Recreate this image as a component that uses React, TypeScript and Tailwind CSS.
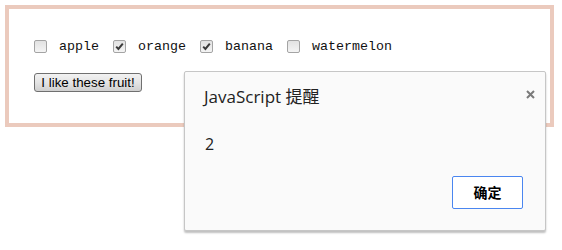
import { FC } from 'react';

const fruits = [
  { name: 'apple', checked: false },
  { name: 'orange', checked: true },
  { name: 'banana', checked: true },
  { name: 'watermelon', checked: false },
];

const Box: FC<{ checked: boolean }> = ({ checked }) => (
  <span className="flex h-[13px] w-[13px] items-center justify-center rounded-[2px] border border-[#a4a4a4] bg-gradient-to-b from-[#e2e2e2] to-[#f4f4f4]">
    {checked && (
      <svg width="9" height="9" viewBox="0 0 9 9">
        <path d="M1.2 4.6 L3.4 6.9 L7.8 1.6" fill="none" stroke="#3a3a3a" strokeWidth="2" />
      </svg>
    )}
  </span>
);

const App: FC = () => {
  return (
    <div className="relative h-[250px] w-[562px] overflow-hidden bg-white">
      <div className="ml-[5px] mt-[5px] h-[122px] w-[549px] border-4 border-[#ebcabd] pl-[25px] pt-[31px]">
        <div className="flex h-[13px] items-center font-['Liberation_Mono',monospace] text-[13.33px] text-[#111]">
          {fruits.map((f, i) => (
            <div key={f.name} className={i === 0 ? 'flex items-center' : 'ml-[14px] flex items-center'}>
              <Box checked={f.checked} />
              <span className="ml-[12px] leading-[13px]">{f.name}</span>
            </div>
          ))}
        </div>
        <button className="mt-[20px] flex h-[19px] w-[108px] items-center justify-center rounded-[3px] border border-[#707070] bg-gradient-to-b from-[#f2f2f2] via-[#e4e4e4] to-[#cfcfcf] font-['Liberation_Sans',Arial,sans-serif] text-[13.33px] leading-none text-black">
          I like these fruit!
        </button>
      </div>

      {/* alert dialog */}
      <div className="absolute left-[184px] top-[71px] flex h-[160px] w-[362px] flex-col rounded-[2px] border border-[#c6c6c6] bg-[#fafafa] font-['Open_Sans','Noto_Sans_CJK_SC',sans-serif] shadow-[0_2px_2px_rgba(0,0,0,0.25)]">
        <div className="flex items-start justify-between pl-[19px] pr-[10px] pt-[14px]">
          <span className="text-[17px] leading-[22px] text-[#222]">JavaScript 提醒</span>
          <svg width="9" height="9" viewBox="0 0 9 9" className="mt-[4px]">
            <path d="M1 1 L8 8 M8 1 L1 8" stroke="#7a7a7a" strokeWidth="2" />
          </svg>
        </div>
        <div className="pl-[20px] pt-[27px] text-[16px] leading-[18px] text-[#222]">2</div>
        <div className="mt-auto flex justify-end pb-[21px] pr-[22px]">
          <button className="h-[33px] w-[71px] rounded-[2px] border border-[#4a86f0] bg-white font-['Noto_Sans_CJK_SC',sans-serif] text-[14px] font-bold text-black">
            确定
          </button>
        </div>
      </div>
    </div>
  );
};

export default App;
